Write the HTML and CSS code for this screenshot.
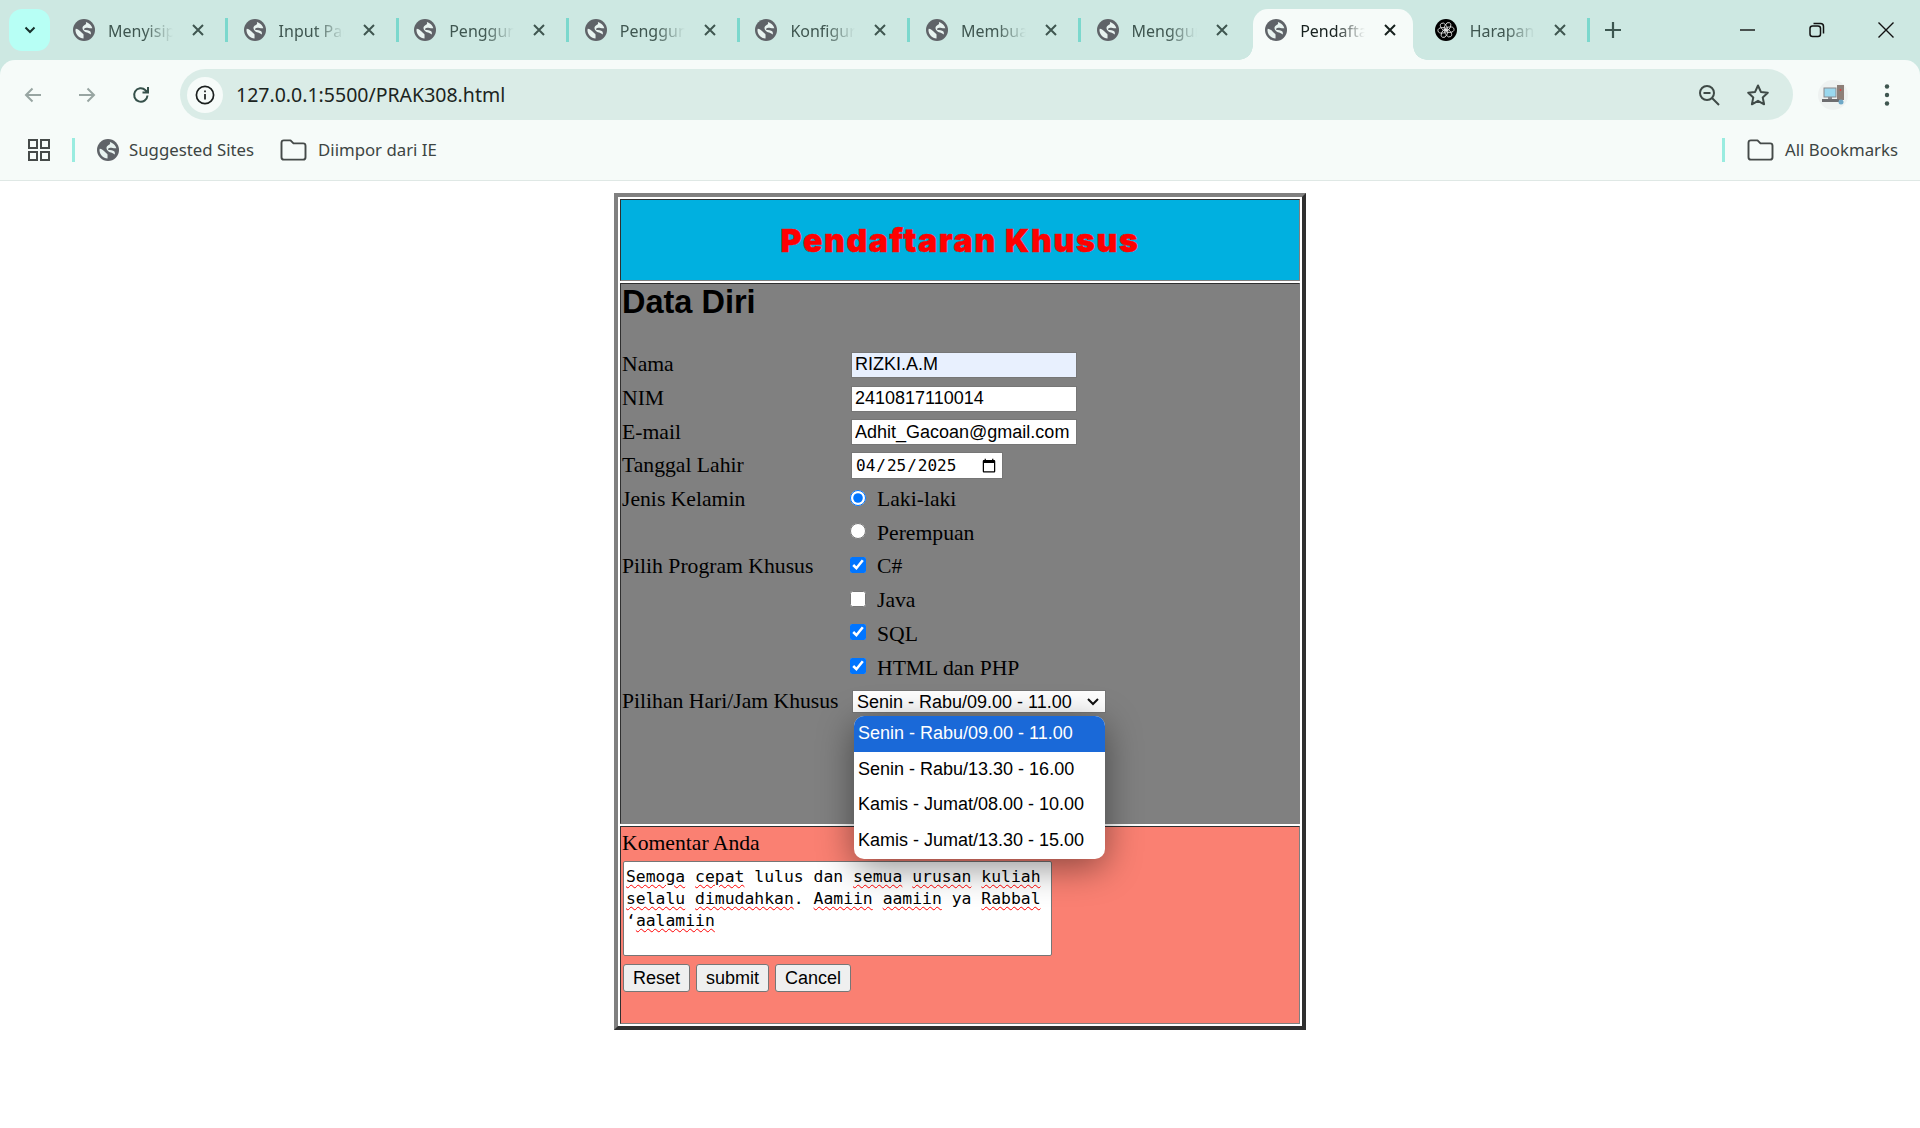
FILE: index.html
```html
<!DOCTYPE html>
<html lang="id">
  <head>
    <meta charset="UTF-8" />
    <title>Pendaftaran Khusus</title>
    <link rel="stylesheet" href="styles.css">
  </head>
  <body>
    <svg class="defs" width="0" height="0">
      <symbol id="globe" viewBox="0 0 24 24">
        <circle cx="12" cy="12" r="12" fill="#5f6368" />
        <path d="M3 10.500c2 0 4 1.500 5.500 3.500 1 1.500 2.500 1.500 3 3v4.300C6.800 21 3 17.200 2.700 12.500c0-.7.1-1.300.3-2z" fill="#e8f3f0" />
        <path d="M14 3.200c2 .6 3.800 1.700 5.200 3.300.9 1.100 1.500 2.300 1.900 3.600-2.400.3-4.800-.5-6.600-.5-1.500 0-2.500 1-2.500 2 2.500.6 5.500.3 7 2 .6 1 .7 2.200.4 3.400l-1.700-1.200c-1.300-1-3.300-1.300-4.700-2-1.800-1-3-2.700-2.600-4.700.4-1.900 2.600-2.700 3.600-3.500.4-.5.4-1.400 0-2.400z" fill="#e8f3f0" />
      </symbol>
      <symbol id="close" viewBox="0 0 16 16">
        <path d="M3 3l10 10M13 3L3 13" fill="none" stroke="currentColor" stroke-width="2" />
      </symbol>
      <symbol id="folder" viewBox="0 0 24 20">
        <path d="M2 4a2 2 0 0 1 2-2h5.500l2.500 2.500h8a2 2 0 0 1 2 2V16a2 2 0 0 1-2 2H4a2 2 0 0 1-2-2z" fill="none" stroke="#454a49" stroke-width="1.600" stroke-linejoin="round" />
      </symbol>
    </svg>

    <header class="browser">
      <div class="tabstrip">
        <button class="tab-list">
          <svg width="14" height="14" viewBox="0 0 14 14"><path d="M2.500 4.500L7 9l4.500-4.500" fill="none" stroke="#17302b" stroke-width="2" /></svg>
        </button>
        <div class="tabs">
          <div class="tab"><svg class="favicon"><use href="#globe" /></svg><span class="tab-title">Menyisipkan</span><svg class="tab-close"><use href="#close" /></svg><i class="tab-sep"></i></div>
          <div class="tab"><svg class="favicon"><use href="#globe" /></svg><span class="tab-title">Input Pada</span><svg class="tab-close"><use href="#close" /></svg><i class="tab-sep"></i></div>
          <div class="tab"><svg class="favicon"><use href="#globe" /></svg><span class="tab-title">Pengguna</span><svg class="tab-close"><use href="#close" /></svg><i class="tab-sep"></i></div>
          <div class="tab"><svg class="favicon"><use href="#globe" /></svg><span class="tab-title">Pengguna</span><svg class="tab-close"><use href="#close" /></svg><i class="tab-sep"></i></div>
          <div class="tab"><svg class="favicon"><use href="#globe" /></svg><span class="tab-title">Konfigurasi</span><svg class="tab-close"><use href="#close" /></svg><i class="tab-sep"></i></div>
          <div class="tab"><svg class="favicon"><use href="#globe" /></svg><span class="tab-title">Membuat</span><svg class="tab-close"><use href="#close" /></svg><i class="tab-sep"></i></div>
          <div class="tab"><svg class="favicon"><use href="#globe" /></svg><span class="tab-title">Menggunakan</span><svg class="tab-close"><use href="#close" /></svg></div>
          <div class="tab tab-active"><svg class="favicon"><use href="#globe" /></svg><span class="tab-title">Pendaftaran</span><svg class="tab-close"><use href="#close" /></svg></div>
          <div class="tab">
            <svg class="favicon" viewBox="0 0 24 24">
              <circle cx="12" cy="12" r="12" fill="#000" />
              <g fill="none" stroke="#e6e6e6" stroke-width="0.900">
                <ellipse cx="12" cy="8" rx="3" ry="4.800" transform="rotate(25 12 12)" />
                <ellipse cx="12" cy="8" rx="3" ry="4.800" transform="rotate(85 12 12)" />
                <ellipse cx="12" cy="8" rx="3" ry="4.800" transform="rotate(145 12 12)" />
                <ellipse cx="12" cy="8" rx="3" ry="4.800" transform="rotate(205 12 12)" />
                <ellipse cx="12" cy="8" rx="3" ry="4.800" transform="rotate(265 12 12)" />
                <ellipse cx="12" cy="8" rx="3" ry="4.800" transform="rotate(325 12 12)" />
              </g>
            </svg>
            <span class="tab-title">Harapan</span><svg class="tab-close"><use href="#close" /></svg><i class="tab-sep"></i>
          </div>
        </div>
        <svg class="new-tab" width="20" height="20" viewBox="0 0 20 20"><path d="M10 2v16M2 10h16" stroke="#3c5650" stroke-width="2.200" /></svg>
        <div class="window-controls">
          <svg width="16" height="16" viewBox="0 0 16 16"><path d="M0 8h15" stroke="#111" stroke-width="1.400" /></svg>
          <svg width="16" height="16" viewBox="0 0 16 16"><rect x="1" y="4" width="10.500" height="10.500" rx="2.500" fill="none" stroke="#111" stroke-width="1.500" /><path d="M4.500 1.500h7a3 3 0 0 1 3 3v7" fill="none" stroke="#111" stroke-width="1.500" /></svg>
          <svg width="16" height="16" viewBox="0 0 16 16"><path d="M.5.500l15 15M15.500.500l-15 15" stroke="#111" stroke-width="1.400" /></svg>
        </div>
      </div>

      <div class="toolbar">
        <svg class="nav-icon" width="20" height="20" viewBox="0 0 20 20"><path d="M18 10H3M9.500 3.500L3 10l6.500 6.500" fill="none" stroke="#98a5a2" stroke-width="2" /></svg>
        <svg class="nav-icon" width="20" height="20" viewBox="0 0 20 20"><path d="M2 10h15M10.500 3.500L17 10l-6.500 6.500" fill="none" stroke="#98a5a2" stroke-width="2" /></svg>
        <svg class="nav-icon" width="20" height="20" viewBox="0 0 20 20"><path d="M16.500 10.500a6.700 6.700 0 1 1-2-5.300L17 7.500M17 2v5.500h-5.500" fill="none" stroke="#35504a" stroke-width="2" /></svg>
        <div class="omnibox">
          <span class="site-info">
            <svg width="20" height="20" viewBox="0 0 20 20"><circle cx="10" cy="10" r="8.600" fill="none" stroke="#1a1f1e" stroke-width="1.700" /><path d="M10 9v5.500M10 5.500v1.800" stroke="#1a1f1e" stroke-width="1.700" /></svg>
          </span>
          <span class="url">127.0.0.1:5500/PRAK308.html</span>
          <svg class="omni-zoom" width="22" height="22" viewBox="0 0 22 22"><circle cx="9" cy="9" r="7" fill="none" stroke="#3f4a47" stroke-width="2" /><path d="M14 14l7 7M5.500 9h7" stroke="#3f4a47" stroke-width="2" /></svg>
          <svg class="omni-star" width="24" height="24" viewBox="0 0 24 24"><path d="M12 2.500l2.900 6.400 6.900.8-5.100 4.700 1.400 6.900-6.100-3.500-6.100 3.500 1.400-6.900-5.100-4.700 6.900-.8z" fill="none" stroke="#3f4a47" stroke-width="2" stroke-linejoin="round" /></svg>
        </div>
        <span class="profile">
          <svg width="24" height="22" viewBox="0 0 24 22">
            <rect x="16" y="1" width="7" height="15" fill="#8d7f78" />
            <rect x="3" y="4" width="12" height="9" fill="#9ad8ee" stroke="#8a8a8e" />
            <rect x="7" y="13" width="4" height="2" fill="#8a8a8e" />
            <rect x="1" y="15" width="17" height="3" fill="#6d6d70" />
            <circle cx="19.500" cy="6" r="0.900" fill="#e04040" />
            <circle cx="20" cy="18" r="2.500" fill="#6fa8c7" />
          </svg>
        </span>
        <svg class="menu" width="6" height="22" viewBox="0 0 6 22"><circle cx="3" cy="2.500" r="2.200" fill="#3f5650" /><circle cx="3" cy="11" r="2.200" fill="#3f5650" /><circle cx="3" cy="19.500" r="2.200" fill="#3f5650" /></svg>
      </div>

      <div class="bookmarks">
        <svg class="apps" width="22" height="22" viewBox="0 0 22 22"><g fill="none" stroke="#454a49" stroke-width="2"><rect x="1" y="1" width="8" height="8" /><rect x="13" y="1" width="8" height="8" /><rect x="1" y="13" width="8" height="8" /><rect x="13" y="13" width="8" height="8" /></g></svg>
        <i class="bm-sep"></i>
        <svg class="bm-globe"><use href="#globe" /></svg>
        <span class="bm-label">Suggested Sites</span>
        <svg class="bm-folder"><use href="#folder" /></svg>
        <span class="bm-label">Diimpor dari IE</span>
        <i class="bm-sep bm-sep-right"></i>
        <svg class="bm-folder-all"><use href="#folder" /></svg>
        <span class="bm-label">All Bookmarks</span>
      </div>
    </header>

    <main class="page">
      <table class="frame">
        <tr>
          <td class="cell-title"><h1>Pendaftaran Khusus</h1></td>
        </tr>
        <tr>
          <td class="cell-form">
            <h2>Data Diri</h2>
            <div class="form-grid">
              <span class="lbl">Nama</span>
              <div class="ctl"><input class="text-input autofilled" type="text" value="RIZKI.A.M"></div>
              <span class="lbl">NIM</span>
              <div class="ctl"><input class="text-input" type="text" value="2410817110014"></div>
              <span class="lbl">E-mail</span>
              <div class="ctl"><input class="text-input" type="text" value="Adhit_Gacoan@gmail.com"></div>
              <span class="lbl">Tanggal Lahir</span>
              <div class="ctl"><input class="date-input" type="date" value="2025-04-25"></div>
              <span class="lbl">Jenis Kelamin</span>
              <label class="ctl"><input type="radio" name="jk" checked>Laki-laki</label>
              <label class="ctl ctl-alone"><input type="radio" name="jk">Perempuan</label>
              <span class="lbl">Pilih Program Khusus</span>
              <label class="ctl"><input type="checkbox" checked>C#</label>
              <label class="ctl ctl-alone"><input type="checkbox">Java</label>
              <label class="ctl ctl-alone"><input type="checkbox" checked>SQL</label>
              <label class="ctl ctl-alone"><input type="checkbox" checked>HTML dan PHP</label>
              <span class="lbl">Pilihan Hari/Jam Khusus</span>
              <div class="ctl select-wrap">
                <select class="jam-select">
                  <option>Senin - Rabu/09.00 - 11.00</option>
                </select>
                <ul class="jam-popup">
                  <li class="selected">Senin - Rabu/09.00 - 11.00</li>
                  <li>Senin - Rabu/13.30 - 16.00</li>
                  <li>Kamis - Jumat/08.00 - 10.00</li>
                  <li>Kamis - Jumat/13.30 - 15.00</li>
                </ul>
              </div>
            </div>
          </td>
        </tr>
        <tr>
          <td class="cell-comment">
            <div class="komentar-label">Komentar Anda</div>
            <div class="komentar-box"><span class="typo">Semoga</span> <span class="typo">cepat</span> lulus dan <span class="typo">semua</span> <span class="typo">urusan</span> <span class="typo">kuliah</span> <span class="typo">selalu</span> <span class="typo">dimudahkan</span>. <span class="typo">Aamiin</span> <span class="typo">aamiin</span> ya <span class="typo">Rabbal</span> ‘<span class="typo">aalamiin</span></div>
            <div class="actions">
              <button>Reset</button>
              <button>submit</button>
              <button>Cancel</button>
            </div>
          </td>
        </tr>
      </table>
    </main>
  </body>
</html>
```

FILE: styles.css
```css
* {
  box-sizing: border-box;
}

html,
body {
  height: 100%;
}

body {
  margin: 0;
  background: #fff;
  overflow: hidden;
  font-family: "Liberation Serif", serif;
}

.defs {
  display: block;
  height: 0;
}

/* browser chrome */
.browser {
  background: #cde8e2;
  font-family: "Noto Sans", sans-serif;
}

.tabstrip {
  display: flex;
  height: 60px;
  padding-top: 9px;
  padding-left: 9px;
}

.tab-list {
  width: 41px;
  height: 42px;
  margin-right: 6px;
  padding: 0;
  border: none;
  border-radius: 13px;
  background: #b7fff5;
  display: flex;
  align-items: center;
  justify-content: center;
}

.tabs {
  display: flex;
}

.tab {
  position: relative;
  width: 170.6px;
  height: 51px;
  padding-left: 17px;
  padding-bottom: 9px;
  display: flex;
  align-items: center;
  color: #3f5650;
}

.tab-active {
  width: 160px;
  margin: 0 4.500px 0 3px;
  padding-left: 12px;
  background: #f6fbf9;
  border-radius: 15px 15px 0 0;
  color: #17211f;
}

.tab-active::before,
.tab-active::after {
  content: "";
  position: absolute;
  bottom: 0;
  width: 14px;
  height: 14px;
}

.tab-active::before {
  left: -14px;
  background: radial-gradient(circle at 0 0, transparent 13.500px, #f6fbf9 14px);
}

.tab-active::after {
  right: -14px;
  background: radial-gradient(circle at 100% 0, transparent 13.500px, #f6fbf9 14px);
}

.favicon {
  width: 22px;
  height: 22px;
  flex: none;
}

.tab-title {
  width: 65px;
  margin-left: 13px;
  padding-top: 2px;
  overflow: hidden;
  white-space: nowrap;
  font-size: 16px;
  flex: none;
  -webkit-mask-image: linear-gradient(to right, #000 55%, transparent 100%);
  mask-image: linear-gradient(to right, #000 55%, transparent 100%);
}

.tab-close {
  width: 16px;
  height: 16px;
  margin-left: 17px;
  flex: none;
}

.tab-sep {
  width: 3px;
  height: 24px;
  margin-left: 19px;
  background: #7bd8cd;
  flex: none;
}

.new-tab {
  margin: 11px 0 0 15px;
}

.window-controls {
  margin-left: auto;
  padding-right: 26px;
  padding-top: 13px;
  display: flex;
  gap: 53px;
  align-items: flex-start;
}

.toolbar {
  height: 60px;
  padding: 9px 23px 0 23px;
  background: #f6fbf9;
  border-radius: 15px 15px 0 0;
  display: flex;
  align-items: center;
}

.nav-icon {
  margin-right: 34px;
  flex: none;
}

.nav-icon:nth-child(3) {
  margin-right: 29px;
}

.omnibox {
  width: 1613px;
  height: 51px;
  padding-left: 7px;
  padding-right: 23px;
  background: #daece7;
  border-radius: 26px;
  display: flex;
  align-items: center;
  flex: none;
}

.site-info {
  width: 36px;
  height: 36px;
  border-radius: 50%;
  background: #f6fbf9;
  display: flex;
  align-items: center;
  justify-content: center;
}

.url {
  margin-left: 13px;
  font-size: 19.500px;
  color: #1b2421;
}

.omni-zoom {
  margin-left: auto;
}

.omni-star {
  margin-left: 26px;
}

.profile {
  width: 30px;
  height: 30px;
  margin-left: 25px;
  border-radius: 50%;
  background: #eef2f1;
  display: flex;
  align-items: center;
  justify-content: center;
  flex: none;
}

.menu {
  margin-left: 36px;
  flex: none;
}

.bookmarks {
  height: 61px;
  padding: 0 22px 1px 28px;
  background: #f6fbf9;
  border-bottom: 1px solid #dfe8e5;
  display: flex;
  align-items: center;
}

.bm-sep {
  width: 3px;
  height: 24px;
  margin: 0 22px 0 22px;
  background: #99ece0;
  flex: none;
}

.bm-sep-right {
  margin: 0 21px 0 auto;
}

.bm-globe {
  width: 22px;
  height: 22px;
}

.bm-folder,
.bm-folder-all {
  width: 29px;
  height: 24px;
}

.bm-folder {
  margin-left: 25px;
}

.bm-label {
  margin-left: 10px;
  font-size: 16.800px;
  color: #3d4543;
  white-space: nowrap;
}

/* halaman */
.page {
  padding-top: 12px;
}

.frame {
  width: 692px;
  margin: 0 auto;
  border-spacing: 2px;
  border-collapse: separate;
  border-width: 4px;
  border-style: solid;
  border-color: #808080 #2f2f2f #2f2f2f #808080;
  font-size: 21.670px;
  color: #000;
}

.frame td {
  padding: 0;
  border-width: 1px;
  border-style: solid;
  border-color: #2f2f2f #808080 #808080 #2f2f2f;
  vertical-align: top;
}

.cell-title {
  height: 82px;
  background: #00b0e0;
  text-align: center;
}

.cell-title h1 {
  margin: 0;
  padding-top: 1px;
  line-height: 79px;
  font-family: Inter, "Liberation Sans", sans-serif;
  font-size: 32px;
  font-weight: 900;
  letter-spacing: 1.700px;
  -webkit-text-stroke: 0.5px #f00;
  color: #f00;
}

.cell-form {
  height: 541px;
  background: #808080;
}

.cell-form h2 {
  margin: 0 0 27px 1px;
  font-family: "Liberation Sans", sans-serif;
  font-size: 32.500px;
  line-height: 37px;
}

.form-grid {
  display: grid;
  grid-template-columns: 229px 1fr;
  grid-auto-rows: 33.7px;
  padding-left: 1px;
}

.lbl,
.ctl {
  display: flex;
  align-items: center;
}

.ctl-alone {
  grid-column: 2;
}

.ctl input[type="radio"],
.ctl input[type="checkbox"] {
  width: 16px;
  height: 16px;
  margin: 0 11px 4px -1px;
  flex: none;
}

.text-input {
  width: 226px;
  height: 26px;
  padding: 1px 3px;
  border: 1px solid #767676;
  border-radius: 0;
  background: #fff;
  font-family: "Liberation Sans", sans-serif;
  font-size: 18px;
}

.autofilled {
  background: #e8f0fe;
}

.date-input {
  width: 152px;
  height: 27px;
  padding: 1px 3px;
  border: 1px solid #767676;
  background: #fff;
  font-family: "DejaVu Sans Mono", monospace;
  font-size: 16px;
}

.select-wrap {
  position: relative;
}

.jam-select {
  width: 254px;
  height: 23px;
  margin-left: 1px;
  padding: 0 0 0 4px;
  border: 1px solid #767676;
  border-radius: 0;
  appearance: none;
  background: #fff url("data:image/svg+xml,%3Csvg xmlns='http://www.w3.org/2000/svg' width='12' height='8'%3E%3Cpath d='M1 1l5 5 5-5' fill='none' stroke='%23111' stroke-width='2'/%3E%3C/svg%3E") no-repeat right 6px center;
  font-family: "Liberation Sans", sans-serif;
  font-size: 18px;
}

.jam-popup {
  position: absolute;
  top: 31px;
  left: 3px;
  width: 251px;
  margin: 0;
  padding: 0;
  list-style: none;
  background: #fff;
  border-radius: 10px;
  overflow: hidden;
  box-shadow: 0 8px 36px rgba(0, 0, 0, 0.45);
  font-family: "Liberation Sans", sans-serif;
  font-size: 18px;
  z-index: 5;
}

.jam-popup li {
  height: 35.800px;
  padding-left: 4px;
  line-height: 34px;
}

.jam-popup .selected {
  background: #1a69d8;
  color: #fff;
}

.cell-comment {
  height: 198px;
  background: #fa8072;
}

.komentar-label {
  margin: 4px 0 0 1px;
  line-height: 25px;
}

.komentar-box {
  width: 429px;
  height: 95px;
  margin: 5px 0 0 2px;
  padding: 4px 2px;
  border: 1px solid #767676;
  border-radius: 2px;
  background: #fff;
  font-family: "DejaVu Sans Mono", monospace;
  font-size: 16.400px;
  line-height: 22px;
}

.typo {
  text-decoration: underline wavy #f00 1.300px;
  text-underline-offset: 2px;
}

.actions {
  margin: 8px 0 0 2px;
  display: flex;
  gap: 6px;
}

.actions button {
  height: 28px;
  padding: 0 9px;
  border: 1px solid #767676;
  border-radius: 3px;
  background: #efefef;
  font-family: "Liberation Sans", sans-serif;
  font-size: 18px;
  color: #000;
}
```
